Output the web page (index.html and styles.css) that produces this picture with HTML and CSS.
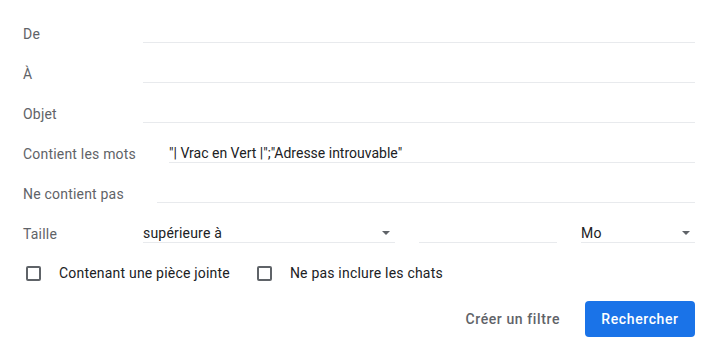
FILE: index.html
```
<!doctype html>
<html lang="fr">
<head>
    <meta charset="UTF-8">
    <title>Recherche avancée</title>
    <link rel="stylesheet" href="styles.css">
</head>
<body>
<form class="search">
    <div class="row">
        <label class="label">De</label>
        <input class="field" type="text">
    </div>
    <div class="row">
        <label class="label">À</label>
        <input class="field" type="text">
    </div>
    <div class="row">
        <label class="label">Objet</label>
        <input class="field" type="text">
    </div>
    <div class="row">
        <label class="label">Contient les mots</label>
        <input class="field" type="text" value='"| Vrac en Vert |";"Adresse introuvable"'>
    </div>
    <div class="row">
        <label class="label">Ne contient pas</label>
        <input class="field" type="text">
    </div>
    <div class="row">
        <label class="label">Taille</label>
        <div class="size">
            <div class="select op">
                <span>supérieure à</span>
                <span class="arrow"></span>
            </div>
            <input class="field num" type="text">
            <div class="select unit">
                <span>Mo</span>
                <span class="arrow"></span>
            </div>
        </div>
    </div>
    <div class="checks">
        <label class="check"><span class="box"></span>Contenant une pièce jointe</label>
        <label class="check"><span class="box"></span>Ne pas inclure les chats</label>
    </div>
    <div class="actions">
        <button type="button" class="btn flat">Créer un filtre</button>
        <button type="button" class="btn primary">Rechercher</button>
    </div>
</form>
</body>
</html>
```

FILE: styles.css
```
* {
    margin: 0;
    padding: 0;
    box-sizing: border-box;
}

body {
    font-family: Roboto, "Liberation Sans", sans-serif;
    font-size: 14px;
    letter-spacing: 0.2px;
    color: #202124;
    background: #fff;
}

.search {
    padding: 13px 20px 0 23px;
}

.row {
    display: flex;
    align-items: center;
    height: 40px;
}

.label {
    min-width: 87px;
    margin-right: 33px;
    padding-top: 1px;
    color: #5f6368;
    white-space: nowrap;
}

.field {
    flex: 1;
    height: 19px;
    margin-top: 1px;
    border: 0;
    border-bottom: 1px solid #e8eaed;
    font: inherit;
    letter-spacing: 0;
    color: #202124;
    outline: none;
    background: transparent;
}

.size {
    flex: 1;
    display: flex;
    align-items: center;
    gap: 24px;
}

.select {
    display: flex;
    align-items: center;
    justify-content: space-between;
    height: 19px;
    margin-top: 1px;
    border-bottom: 1px solid #e8eaed;
    padding-right: 5px;
}

.select.op {
    width: 252px;
}

.select.unit {
    width: 114px;
}

.field.num {
    flex: none;
    width: 138px;
}

.arrow {
    width: 0;
    height: 0;
    border-left: 4px solid transparent;
    border-right: 4px solid transparent;
    border-top: 4px solid #5f6368;
}

.checks {
    display: flex;
    align-items: center;
    height: 40px;
    padding-left: 3px;
}

.check {
    display: flex;
    align-items: center;
    margin-right: 27px;
}

.box {
    width: 15px;
    height: 15px;
    border: 2px solid #5f6368;
    border-radius: 2px;
    margin-right: 18px;
}

.actions {
    display: flex;
    justify-content: flex-end;
    gap: 1px;
    margin-top: 8px;
}

.btn {
    height: 36px;
    border: 0;
    border-radius: 4px;
    font-family: Roboto, "Liberation Sans", sans-serif;
    font-size: 14px;
    font-weight: 500;
    letter-spacing: 0.6px;
    background: transparent;
}

.btn.flat {
    color: #5f6368;
    padding: 0 24px;
}

.btn.primary {
    background: #1a73e8;
    color: #fff;
    width: 110px;
}
```
